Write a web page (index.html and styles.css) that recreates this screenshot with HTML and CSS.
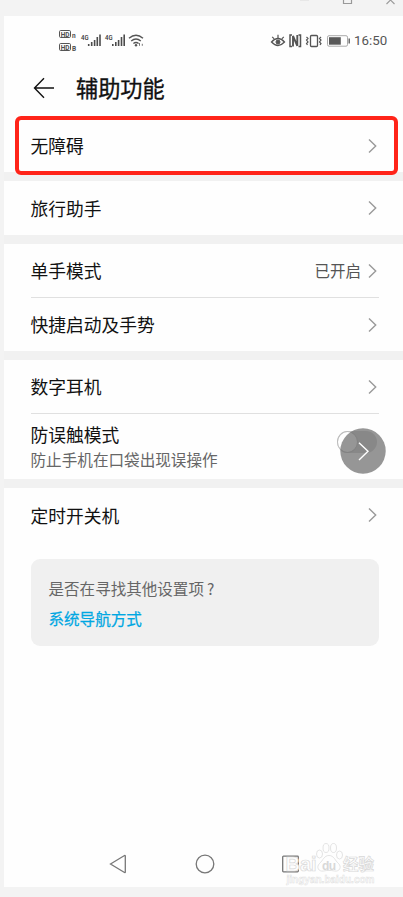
FILE: index.html
```html
<!DOCTYPE html>
<html lang="zh-CN">
<head>
<meta charset="utf-8">
<title>辅助功能</title>
<link rel="stylesheet" href="styles.css">
</head>
<body>
<svg class="defs" width="0" height="0"><symbol id="chevron" viewBox="0 0 9 16"><path d="M1 1.500 7.700 8 1 14.500" fill="none" stroke="currentColor" stroke-width="1.400"/></symbol></svg>
<div class="window-bar">
  <svg width="403" height="16" viewBox="0 0 403 16" fill="none">
    <path d="M300 0h9" stroke="#dcdcdc"/>
    <path d="M343.500-5h8v8.500h-8z" stroke="#999" stroke-width="1.200"/>
    <path d="m386.500 4 8-8m0 8-8-8" stroke="#999" stroke-width="1.100"/>
  </svg>
</div>
<main class="phone">
  <section class="group top">
    <div class="status">
      <svg class="status-left" width="90" height="28" viewBox="56 27 90 28">
        <g fill="none" stroke="#555" stroke-width="1"><rect x="59.500" y="30.500" width="11" height="7" rx="1.200"/><rect x="59.500" y="43.500" width="11" height="7" rx="1.200"/></g>
        <g class="tiny"><text x="60.700" y="36.600" textLength="8.800" lengthAdjust="spacingAndGlyphs">HD</text><text x="60.700" y="49.600" textLength="8.800" lengthAdjust="spacingAndGlyphs">HD</text><text x="72" y="38">n</text><text x="72" y="51">B</text></g>
        <g class="net"><text x="81" y="39.800" textLength="7.500" lengthAdjust="spacingAndGlyphs">4G</text><text x="105" y="39.800" textLength="7.500" lengthAdjust="spacingAndGlyphs">4G</text></g>
        <path stroke="#4c4c4c" stroke-width="1.600" d="M88.700 46v-2m3 2v-4m2.900 4v-6m2.700 6v-9m2.700 9V34.500M112.800 46v-2m3 2v-4m2.800 4v-6m2.900 6v-9m2.700 9V34.500"/>
        <g fill="none" stroke="#555" stroke-width="1.400"><path d="M129 38.200q7-6 14 0M131.200 41q4.800-4 9.600 0M133.400 43.500q2.600-2 5.200 0"/></g>
        <circle cx="136" cy="45.200" r="1.200" fill="#555"/><path d="M139.500 43v2.800m2.800-2v2" stroke="#777" stroke-width="1"/>
      </svg>
      <div class="status-right">
        <svg width="82" height="20" viewBox="270 31 82 20" fill="none" stroke="#555">
          <path d="M271.500 42q6.500-7 13 0-6.500 7-13 0z" stroke-width="1.300"/><circle cx="278" cy="42" r="2" fill="#555"/><path d="M278 38v-3.200m-3.800 4-2-2m9.600 2 2-2" stroke-width="1.200"/>
          <path d="M292 35h-2v11.500h2m6.500-11.500h2v11.500h-2" stroke-width="1.500"/><path d="M293 46.500V36l4.300 9.800V35" stroke-width="1.900"/>
          <rect x="310.500" y="35.500" width="7" height="11" rx="1" stroke-width="1.300"/><path d="m306.500 37 1.500 1.500-1.500 1.500 1.500 2-1.500 1.500 1 1.500m13.500-8-1.500 1.500 1.500 1.500-1.500 2 1.500 1.500-1 1.500" stroke-width="1.200"/>
          <rect x="327.500" y="35.700" width="20" height="10.500" rx="1.500" stroke="#aaa" stroke-width="1"/><path d="M329 37.200h11.800v7.500H329z" fill="#595959" stroke="none"/><path d="M349.200 38.500v5" stroke-width="1.300"/>
        </svg>
        <span class="time">16:50</span>
      </div>
    </div>
    <header class="title-bar">
      <svg width="22" height="22" viewBox="0 0 22 22" fill="none" stroke="#111" stroke-width="1.400"><path d="M21 11H1.700M11 1.300 1.500 11l9.500 9.700"/></svg>
      <h1>辅助功能</h1>
    </header>
    <div class="row"><span>无障碍</span><svg class="chev"><use href="#chevron"/></svg><i class="highlight"></i></div>
  </section>
  <section class="group">
    <div class="row"><span>旅行助手</span><svg class="chev"><use href="#chevron"/></svg></div>
  </section>
  <section class="group">
    <div class="row divided"><span>单手模式</span><span class="value">已开启</span><svg class="chev"><use href="#chevron"/></svg></div>
    <div class="row"><span>快捷启动及手势</span><svg class="chev"><use href="#chevron"/></svg></div>
  </section>
  <section class="group">
    <div class="row divided"><span>数字耳机</span><svg class="chev"><use href="#chevron"/></svg></div>
    <div class="row double">
      <div class="copy"><span>防误触模式</span><small>防止手机在口袋出现误操作</small></div>
      <div class="toggle"><i class="knob"></i></div>
      <svg class="assist" viewBox="0 0 46 46"><circle cx="23" cy="23" r="22.700" fill="#696969" fill-opacity=".7"/><path d="m19 14.700 9 8.600-9 8.600" fill="none" stroke="#fff" stroke-width="1.400"/></svg>
    </div>
  </section>
  <section class="group last">
    <div class="row"><span>定时开关机</span><svg class="chev"><use href="#chevron"/></svg></div>
    <aside class="suggest"><p>是否在寻找其他设置项<span class="mark-q">?</span></p><a>系统导航方式</a></aside>
    <nav class="nav">
      <svg width="18" height="20" viewBox="0 0 18 20"><path d="M1.500 10 15.500 1.500q.8-.3.800.6v15.800q0 .9-.8.600z"/></svg>
      <svg width="20" height="20" viewBox="0 0 20 20"><circle cx="10" cy="10" r="8.800"/></svg>
      <svg width="18" height="20" viewBox="0 0 18 20"><rect x=".7" y="2.200" width="15.600" height="15.600" rx=".8"/></svg>
    </nav>
    <svg class="watermark" viewBox="284 840 94 46">
      <g class="mark"><text x="285.500" y="871" font-size="20" textLength="31" lengthAdjust="spacingAndGlyphs">Bai</text>
      <path d="M329 855.500c-5 0-6 5-9.500 8-3.500 3.500-1 8.500 4 7.500 4-.8 7-.8 11 0 5 1 7.500-4 4-7.500-3.500-3-4.500-8-9.500-8z"/><ellipse cx="319.500" cy="854" rx="3" ry="4"/><ellipse cx="326" cy="848" rx="3" ry="4.500"/><ellipse cx="333.500" cy="848" rx="3" ry="4.500"/><ellipse cx="339.500" cy="855" rx="3" ry="4"/>
      <text x="343" y="870" font-size="15.500" textLength="31" lengthAdjust="spacingAndGlyphs">经验</text></g>
      <text class="du" x="322" y="869.500" font-size="12" textLength="14">du</text>
      <text class="url" x="286.500" y="882.500" font-size="10" textLength="88">jingyan.baidu.com</text>
    </svg>
  </section>
</main>
</body>
</html>
```
FILE: styles.css
```css
* { box-sizing: border-box; }
body { margin: 0; height: 897px; overflow: hidden; background: #f3f3f3; color: #111; font-family: "Noto Sans CJK SC", sans-serif; }
.defs { position: absolute; }
.window-bar { height: 16px; }
.window-bar svg { display: block; }
.phone { display: flex; flex-direction: column; gap: 9px; margin-left: 4px; height: 871px; background: #f1f1f1; }
.group { background: #fefefe; }
.top { height: 156px; }
.status { display: flex; justify-content: space-between; height: 50px; padding: 11px 16px 0 52px; }
.status-left { font-family: Roboto, sans-serif; }
.tiny { font-size: 6.500px; font-weight: 700; fill: #4d4d4d; }
.net { font-size: 7.500px; font-weight: 500; fill: #333; }
.status-right { display: flex; height: 28px; align-items: center; gap: 2px; }
.time { width: 33px; font: 13.300px/20px Roboto, sans-serif; color: #555; white-space: nowrap; }
.title-bar { display: flex; align-items: center; gap: 21px; height: 44px; padding-left: 29px; }
.title-bar h1 { margin: -2px 0 0; font-size: 22.200px; line-height: 32px; font-weight: 400; -webkit-text-stroke: .35px currentColor; }
.top .row { margin-top: 9px; }
.row { position: relative; display: flex; align-items: center; height: 54px; margin: 0 24px 0 26.500px; font-size: 17.750px; line-height: 26px; }
.row > span { margin-top: -1px; }
.copy { margin-top: -2px; }
.top .row { height: 53px; }
.divided { border-bottom: 1px solid #e0e0e0; }
.row > .chev { width: 9px; height: 16px; margin: 0 2px 0 auto; color: #999; }
.row > .value { margin-left: auto; font-size: 15.500px; color: #555; }
.row > .value + .chev { margin-left: 7px; }
.group:nth-child(3) .row:last-child { height: 53px; }
.highlight { position: absolute; left: -16px; right: -19px; top: -3px; height: 59px; border: 4px solid #ff2419; border-radius: 6px; z-index: 2; }
.double { height: 65px; }
.copy { display: flex; flex-direction: column; }
.copy small { font-size: 15.600px; line-height: 24px; color: #666; }
.toggle { width: 40px; height: 22px; margin: -9px 2px 0 auto; border-radius: 11px; background: #d0d0d0; }
.knob { display: block; width: 21px; height: 22px; border: 1px solid #bbb; border-radius: 50%; background: #fff; }
.assist { position: absolute; right: -7px; top: 14px; width: 46px; height: 46px; }
.last { position: relative; display: flex; flex-direction: column; flex: 1; }
.suggest { height: 87px; margin: 17px 24px 0 26.500px; padding: 14px 18px; border-radius: 9px; background: #f0f0f0; font-size: 15.550px; line-height: 30px; color: #666; }
.suggest p { margin: 0; }
.mark-q { margin-left: 3px; }
.suggest a { display: block; color: #00a7e2; font-weight: 400; -webkit-text-stroke: .25px currentColor; }
.nav { display: flex; justify-content: space-between; width: 191px; height: 20px; margin: auto 0 13px 105px; }
.nav svg { fill: none; stroke: #777; stroke-width: 1.300; }
.watermark { position: absolute; left: 280px; top: 352px; width: 94px; height: 46px; font-family: "Liberation Sans", "Noto Sans CJK SC", sans-serif; font-weight: 700; }
.mark { fill: #fefefe; stroke: #d8d8d8; stroke-width: .7; }
.du { fill: #d8d8d8; }
.url { fill: #fefefe; stroke: #dedede; stroke-width: .5; }
```
